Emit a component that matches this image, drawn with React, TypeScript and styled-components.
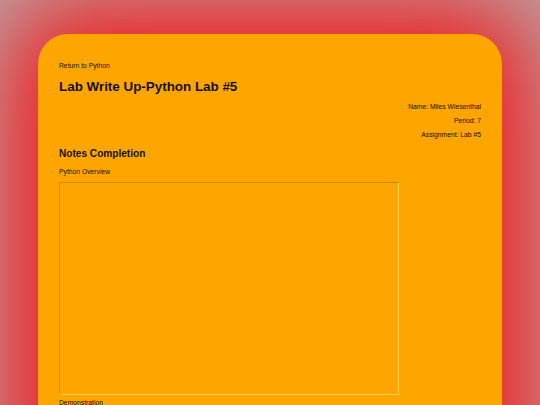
import React from 'react';
import styled, { createGlobalStyle } from 'styled-components';

const GlobalStyle = createGlobalStyle`
  html, body {
    margin: 0;
    padding: 0;
    height: 100%;
    overflow: hidden;
  }
  body {
    background: #bba2a5;
    font-family: "Liberation Sans", Arial, sans-serif;
    color: #111;
  }
`;

const Page = styled.div`
  padding: 34px 38px 0 38px;
  height: 405px;
  box-sizing: border-box;
  overflow: hidden;
`;

const Card = styled.div`
  background: #ffa500;
  border-radius: 30px;
  padding: 28px 21px 40px 21px;
  box-shadow: 0 0 90px 34px #f02222;
  min-height: 500px;
`;

const BackLink = styled.a`
  display: block;
  font-size: 6.75px;
  color: #111;
  text-decoration: none;
  margin: 0 0 10px 0;
`;

const Title = styled.h1`
  font-size: 13.4px;
  font-weight: bold;
  margin: 0 0 9px 0;
`;

const InfoList = styled.div`
  display: flex;
  flex-direction: column;
  align-items: flex-end;
  gap: 7px;
`;

const InfoLine = styled.p`
  font-size: 6.75px;
  margin: 0;
`;

const SectionTitle = styled.h2`
  font-size: 10.1px;
  font-weight: bold;
  margin: 10px 0 9px 0;
`;

const Label = styled.p`
  font-size: 6.75px;
  margin: 0 0 7px 0;
`;

const Frame = styled.div`
  width: 340px;
  height: 213px;
  box-sizing: border-box;
  border-style: solid;
  border-width: 1px;
  border-color: #c98c1c #ffcf4a #ffcf4a #c98c1c;
  margin-bottom: 4px;
`;

const App: React.FC = () => {
  return (
    <>
      <GlobalStyle />
      <Page>
        <Card>
          <BackLink href="#">Return to Python</BackLink>
          <Title>Lab Write Up-Python Lab #5</Title>
          <InfoList>
            <InfoLine>Name: Miles Wiesenthal</InfoLine>
            <InfoLine>Period: 7</InfoLine>
            <InfoLine>Assignment: Lab #5</InfoLine>
          </InfoList>
          <SectionTitle>Notes Completion</SectionTitle>
          <Label>Python Overview</Label>
          <Frame />
          <Label>Demonstration</Label>
        </Card>
      </Page>
    </>
  );
};

export default App;
